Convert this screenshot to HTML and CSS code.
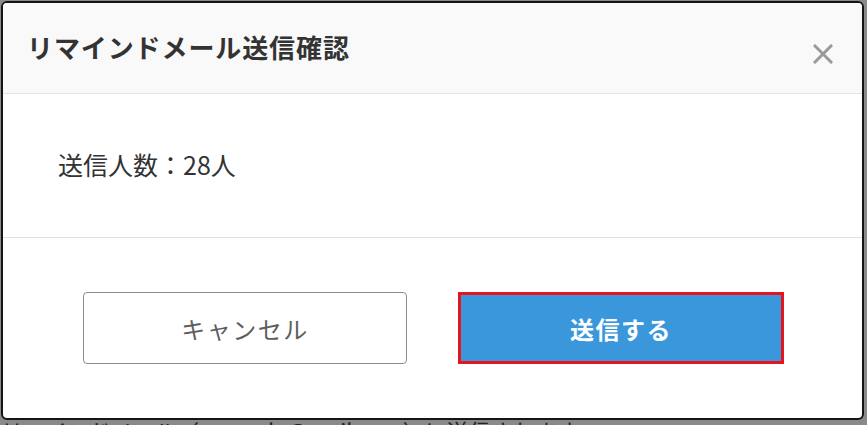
FILE: index.html
```html
<!DOCTYPE html>
<html lang="ja">
<head>
<meta charset="utf-8">
<link rel="stylesheet" href="styles.css">
</head>
<body>
<div class="page">
  <div class="modal">
    <div class="modal-header">
      <h1 class="modal-title">リマインドメール送信確認</h1>
      <button class="close" aria-label="閉じる">
        <svg width="20" height="20" viewBox="0 0 20 20"><path d="M2 2 L18 18 M18 2 L2 18" stroke="#9a9a9a" stroke-width="3" stroke-linecap="square" fill="none"/></svg>
      </button>
    </div>
    <div class="modal-body">
      <p class="count">送信人数：28人</p>
    </div>
    <div class="modal-footer">
      <button class="btn btn-cancel">キャンセル</button>
      <button class="btn btn-send">送信する</button>
    </div>
  </div>
  <p class="behind">リマインドメール（example@mail.com）に送信されます。</p>
</div>
</body>
</html>
```

FILE: styles.css
```css
html, body {
  margin: 0;
  padding: 0;
  background: #8a8a8a;
  overflow: hidden;
}
body {
  width: 867px;
  height: 425px;
  font-family: "Noto Sans CJK JP", "Noto Sans", sans-serif;
}
.page {
  padding: 1px 0 0 1px;
  height: 424px;
  overflow: hidden;
}
.modal {
  width: 859px;
  height: 415px;
  border: 2px solid #151515;
  border-radius: 6px;
  background: #fff;
  display: flex;
  flex-direction: column;
  overflow: hidden;
}
.modal-header {
  height: 90px;
  background: #f9f9f9;
  border-bottom: 1px solid #e3e3e3;
  display: flex;
  align-items: center;
  justify-content: space-between;
  padding: 0 29px 0 24px;
  flex: none;
}
.modal-title {
  margin: 0;
  font-size: 26px;
  font-weight: 700;
  color: #333;
  letter-spacing: 0.9px;
  position: relative;
  top: -2px;
}
.close {
  border: 0;
  background: none;
  padding: 0;
  width: 20px;
  height: 20px;
  display: flex;
  margin-top: 12px;
}
.modal-body {
  height: 143px;
  border-bottom: 1px solid #e0e0e0;
  display: flex;
  align-items: center;
  padding-left: 55px;
  flex: none;
}
.count {
  margin: 0;
  font-size: 25px;
  color: #333;
  position: relative;
  top: -2px;
}
.modal-footer {
  flex: 1;
  display: flex;
  align-items: center;
  justify-content: center;
  gap: 51px;
  padding-left: 2px;
}
.btn {
  font-family: "Noto Sans CJK JP", "Noto Sans", sans-serif;
  font-size: 24px;
  letter-spacing: 1.5px;
  cursor: pointer;
}
.btn-cancel {
  width: 324px;
  height: 72px;
  background: #fff;
  border: 1px solid #8c8c8c;
  border-radius: 4px;
  color: #5e5e5e;
}
.btn-send {
  width: 326px;
  height: 72px;
  background: #3a97db;
  border: 3px solid #e8141b;
  border-radius: 0;
  color: #fff;
  font-weight: 700;
}
.behind {
  margin: -2px 0 0 0;
  font-size: 22px;
  line-height: 24px;
  color: #222;
}
```
